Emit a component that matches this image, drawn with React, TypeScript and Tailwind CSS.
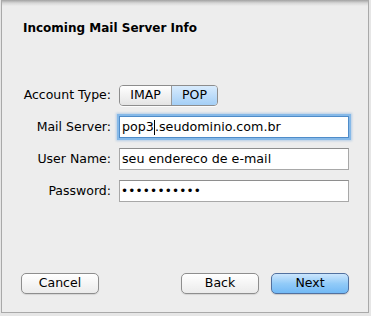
import React from "react";

const font = { fontFamily: '"DejaVu Sans", "Liberation Sans", sans-serif' };

const Label: React.FC<{ text: string }> = ({ text }) => (
  <div className="w-[109px] shrink-0 text-right text-[12.5px] text-black">{text}</div>
);

export default function App() {
  return (
    <div className="h-[316px] w-[371px] bg-[#e6e6e6]" style={font}>
      <div className="ml-[1px] flex h-[313px] w-[368px] flex-col border-x border-b border-[#a9a9a9] bg-[#ededed]">
        {/* shadow under toolbar */}
        <div className="h-[6px] shrink-0 bg-gradient-to-b from-[#a2a2a2] via-[#d6d6d6] to-[#ededed]" />

        <div className="mt-[15px] pl-[21px] text-[12px] font-bold leading-[15px] text-black">
          Incoming Mail Server Info
        </div>

        <div className="mt-[49px] flex flex-col">
          <div className="flex h-[21px] items-center gap-[8px]">
            <Label text="Account Type:" />
            <div className="flex h-[21px] overflow-hidden rounded-[4px] border border-[#8d8d8d] text-[12.5px] text-black shadow-[0_1px_0_rgba(255,255,255,0.8)]">
              <div className="flex w-[52px] items-center justify-center border-r border-[#9a9a9a] bg-gradient-to-b from-white to-[#e4e4e4]">
                IMAP
              </div>
              <div className="flex w-[45px] items-center justify-center bg-gradient-to-b from-[#d8ebfd] to-[#a4cff6]">
                POP
              </div>
            </div>
          </div>

          <div className="mt-[10px] flex h-[22px] items-center gap-[8px]">
            <Label text="Mail Server:" />
            <div className="flex h-[22px] w-[230px] items-center border border-[#4f8cc9] bg-white pl-[2px] text-[12.7px] text-black shadow-[0_0_0_2px_#86b9e8,0_0_2px_3px_rgba(120,170,225,0.45)]">
              <span>pop3</span>
              <span className="h-[15px] w-[1px] bg-black" />
              <span>.seudominio.com.br</span>
            </div>
          </div>

          <div className="mt-[10px] flex h-[22px] items-center gap-[8px]">
            <Label text="User Name:" />
            <div className="flex h-[22px] w-[230px] items-center border border-[#a8a8a8] border-t-[#8e8e8e] bg-white pl-[2px] text-[12.7px] text-black">
              seu endereco de e-mail
            </div>
          </div>

          <div className="mt-[10px] flex h-[22px] items-center gap-[8px]">
            <Label text="Password:" />
            <div className="flex h-[22px] w-[230px] items-center border border-[#a8a8a8] border-t-[#8e8e8e] bg-white pl-[1px] text-[12px] tracking-[0.2px] text-black">
              •••••••••••
            </div>
          </div>
        </div>

        <div className="mt-auto mb-[18px] flex items-center pl-[19px] text-[12.5px] text-black">
          <button className="h-[21px] w-[78px] rounded-[5px] border border-[#8e8e8e] bg-gradient-to-b from-white to-[#ebebeb] shadow-[0_1px_1px_rgba(0,0,0,0.1)]">
            Cancel
          </button>
          <button className="ml-[82px] h-[21px] w-[78px] rounded-[5px] border border-[#8e8e8e] bg-gradient-to-b from-white to-[#ebebeb] shadow-[0_1px_1px_rgba(0,0,0,0.1)]">
            Back
          </button>
          <button className="ml-[12px] h-[21px] w-[78px] rounded-[5px] border border-[#52719f] bg-gradient-to-b from-[#cce6fd] via-[#92cbf8] to-[#72b9f5] shadow-[0_1px_1px_rgba(0,0,0,0.15)]">
            Next
          </button>
        </div>
      </div>
    </div>
  );
}
